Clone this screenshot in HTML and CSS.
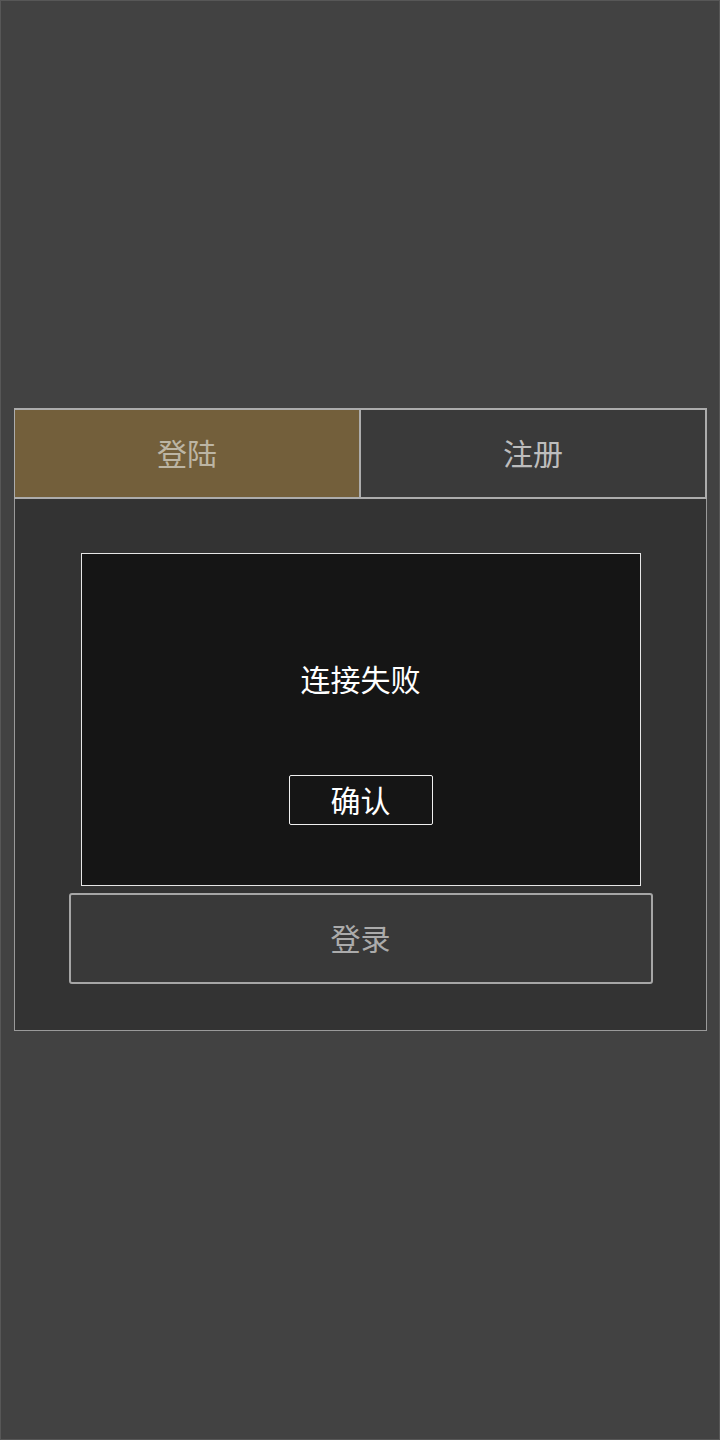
FILE: index.html
```html
<!DOCTYPE html>
<html lang="zh">
<head>
<meta charset="utf-8">
<title>登陆</title>
<link rel="stylesheet" href="styles.css">
</head>
<body>
<div class="screen">
  <div class="card">
    <div class="tabs">
      <div class="tab tab-active">登陆</div>
      <div class="tab">注册</div>
    </div>
    <div class="body">
      <div class="dialog">
        <div class="dialog-msg">连接失败</div>
        <button class="dialog-btn">确认</button>
      </div>
      <button class="login-btn">登录</button>
    </div>
  </div>
</div>
</body>
</html>
```

FILE: styles.css
```css
* { box-sizing: border-box; }
html, body { margin: 0; padding: 0; }
body {
  background: #424242;
  font-family: "Noto Sans CJK SC", "Noto Sans", sans-serif;
}
.screen {
  width: 720px;
  height: 1440px;
  border: 1px solid #575757;
  padding-top: 407px;
  padding-left: 13px;
}
.card {
  width: 693px;
  border: 1px solid #9a9a9a;
  background: #333333;
}
.tabs {
  display: flex;
  height: 91px;
  margin: -1px -1px 0 -1px;
}
.tab {
  flex: 1;
  display: flex;
  align-items: center;
  justify-content: center;
  padding-bottom: 4px;
  font-size: 30px;
  color: #bdbdbd;
  background: #3a3a3a;
  border: 2px solid #acacac;
  border-left-width: 1px;
}
.tab-active {
  background: #735f3b;
  color: #bcb5a4;
  border-left-width: 1px;
  border-right-width: 1px;
}
.body {
  display: flex;
  flex-direction: column;
  align-items: center;
  padding: 54px 0 46px;
}
.dialog {
  width: 560px;
  height: 333px;
  background: #151515;
  border: 1px solid #e6e6e6;
  display: flex;
  flex-direction: column;
  align-items: center;
  padding-top: 106px;
}
.dialog-msg {
  font-size: 30px;
  line-height: 36px;
  color: #ffffff;
}
.dialog-btn {
  margin-top: 79px;
  width: 144px;
  height: 50px;
  background: #151515;
  border: 1px solid #f0f0f0;
  border-radius: 2px;
  color: #ffffff;
  font-family: inherit;
  font-size: 30px;
  padding: 0 0 3px;
}
.login-btn {
  margin-top: 7px;
  width: 584px;
  height: 91px;
  background: #393939;
  border: 2px solid #a6a6a6;
  border-radius: 3px;
  color: #ababab;
  font-family: inherit;
  font-size: 30px;
  padding: 0 0 4px;
}
```
